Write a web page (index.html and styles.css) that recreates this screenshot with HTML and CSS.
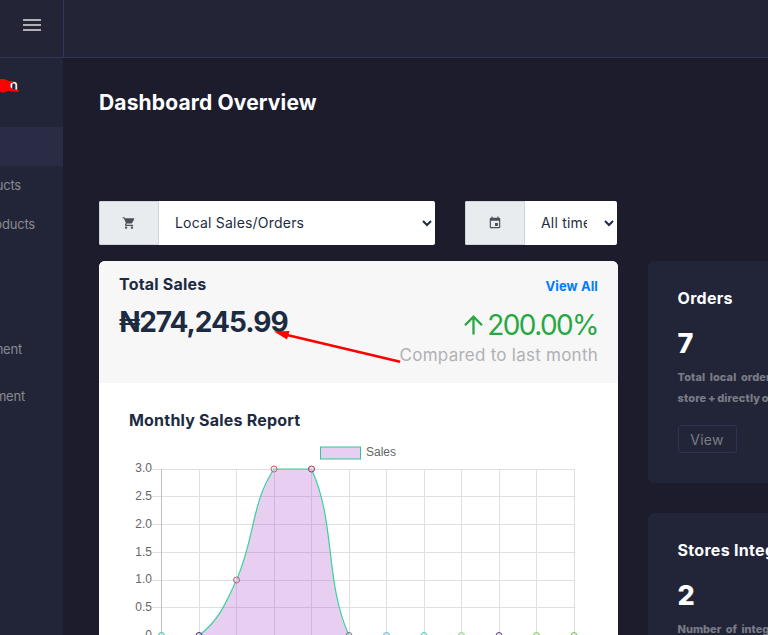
FILE: index.html
```html
<!DOCTYPE html>
<html lang="en">
<head>
    <meta charset="UTF-8">
    <meta name="viewport" content="width=device-width, initial-scale=1.0">
    <title>Dashboard Overview</title>
    <link rel="stylesheet" href="styles.css">
</head>
<body>
    <header class="topbar">
        <div class="topbar-brand">
            <svg class="menu-icon" width="18" height="12" viewBox="0 0 18 12"><path d="M0 0h18v2H0zM0 5h18v2H0zM0 10h18v2H0z" fill="#b1b1b5"/></svg>
        </div>
    </header>

    <div class="layout">
        <aside class="sidebar">
            <div class="user-name">n</div>
            <ul class="nav">
                <li class="nav-item active"></li>
                <li class="nav-item products">Products</li>
                <li class="nav-item more-products">Products</li>
                <li class="nav-item management">Management</li>
                <li class="nav-item management-last">Management</li>
            </ul>
        </aside>

        <main class="content">
            <h1>Dashboard Overview</h1>

            <div class="filters">
                <div class="input-group sales-filter">
                    <span class="input-icon">
                        <svg width="14" height="14" viewBox="0 0 24 24" fill="#495057"><path d="M7 18c-1.1 0-1.99.9-1.99 2S5.9 22 7 22s2-.9 2-2-.9-2-2-2zM1 2v2h2l3.6 7.59-1.35 2.45c-.16.28-.25.61-.25.96 0 1.1.9 2 2 2h12v-2H7.42c-.14 0-.25-.11-.25-.25l.03-.12.9-1.63h7.45c.75 0 1.41-.41 1.75-1.03l3.58-6.49A1 1 0 0 0 20.01 4H5.21l-.94-2H1zm16 16c-1.1 0-1.99.9-1.99 2s.89 2 1.99 2 2-.9 2-2-.9-2-2-2z"/></svg>
                    </span>
                    <select><option>Local Sales/Orders</option></select>
                </div>
                <div class="input-group time-filter">
                    <span class="input-icon">
                        <svg width="14" height="14" viewBox="0 0 24 24" fill="#495057"><path d="M17 12h-5v5h5v-5zM16 1v2H8V1H6v2H5c-1.11 0-1.99.9-1.99 2L3 19a2 2 0 0 0 2 2h14c1.1 0 2-.9 2-2V5c0-1.1-.9-2-2-2h-1V1h-2zm3 18H5V8h14v11z"/></svg>
                    </span>
                    <select><option>All time</option></select>
                </div>
            </div>

            <div class="cards">
                <section class="sales-card">
                    <div class="sales-header">
                        <div>
                            <h2 class="sales-title">Total Sales</h2>
                            <div class="sales-amount">₦274,245.99</div>
                        </div>
                        <div class="sales-compare">
                            <a class="view-all">View All</a>
                            <div class="percent">
                                <svg width="19" height="20" viewBox="0 0 19 20" fill="none" stroke="#28a745" stroke-width="2.3"><path d="M9.5 19.5V2M1 10.3l8.5-8.6 8.5 8.6"/></svg>
                                <span>200.00%</span>
                            </div>
                            <div class="compare-text">Compared to last month</div>
                        </div>
                    </div>
                    <div class="sales-body">
                        <h2 class="report-title">Monthly Sales Report</h2>
                        <svg class="chart" width="460" height="195" viewBox="129 440 460 195">
                            <!-- legend -->
                            <rect x="320.5" y="447" width="40" height="12" fill="#e7cff1" stroke="#35c492"/>
                            <text x="366" y="456">Sales</text>

                            <!-- grid -->
                            <path class="grid" d="M152 469.5H575M152 496.5H575M152 524.5H575M152 552.5H575M152 580.5H575M152 607.5H575"/>
                            <path class="grid" d="M199.5 469V635M236.5 469V635M274.5 469V635M311.5 469V635M349.5 469V635M386.5 469V635M424.5 469V635M461.5 469V635M499.5 469V635M536.5 469V635M574.5 469V635"/>
                            <path d="M161.5 469V635" stroke="#bfbfbf"/>

                            <!-- y axis -->
                            <g text-anchor="end">
                                <text x="152" y="472">3.0</text>
                                <text x="152" y="500">2.5</text>
                                <text x="152" y="528">2.0</text>
                                <text x="152" y="556">1.5</text>
                                <text x="152" y="583">1.0</text>
                                <text x="152" y="611">0.5</text>
                                <text x="152" y="639">0</text>
                            </g>

                            <!-- sales curve -->
                            <path d="M161.5 635.5C161.5 635.5 188.2 635.5 199 635.5C218.2 621 225.6 604.1 236.5 580C255.1 537.7 251.3 502.6 274 469C281.3 469 306.1 469 311.5 469C336.1 523.4 324.4 580.6 349 635.5H574" fill="#b361d4" fill-opacity=".3" stroke="#36d399" stroke-width="1.2"/>

                            <g class="points">
                                <circle cx="161.5" cy="635.5" r="3" stroke="#35d08e"/>
                                <circle cx="199" cy="635.5" r="3" stroke="#3b2a86"/>
                                <circle cx="236.5" cy="580" r="3" stroke="#b85e70"/>
                                <circle cx="274" cy="469" r="3" stroke="#dc5b5b"/>
                                <circle cx="311.5" cy="469" r="3" stroke="#a62d50"/>
                                <circle cx="349" cy="635.5" r="3" stroke="#777"/>
                                <circle cx="386.5" cy="635.5" r="3" stroke="#4bbcd8"/>
                                <circle cx="424" cy="635.5" r="3" stroke="#40dcae"/>
                                <circle cx="461.5" cy="635.5" r="3" stroke="#80e568"/>
                                <circle cx="499" cy="635.5" r="3" stroke="#584588"/>
                                <circle cx="536.5" cy="635.5" r="3" stroke="#68d93c"/>
                                <circle cx="574" cy="635.5" r="3" stroke="#72cf4f"/>
                            </g>
                        </svg>
                    </div>
                </section>

                <div class="stats">
                    <section class="stat-card">
                        <h2>Orders</h2>
                        <div class="stat-value">7</div>
                        <p><span class="line-one">Total local orders from</span><br><span class="line-two">store + directly on</span></p>
                        <button>View</button>
                    </section>
                    <section class="stat-card stores">
                        <h2>Stores Integrated</h2>
                        <div class="stat-value">2</div>
                        <p><span class="line-three">Number of integrated</span></p>
                    </section>
                </div>
            </div>
        </main>
    </div>

    <svg class="annotations" width="768" height="635" viewBox="0 0 768 635">
        <path d="M0 79L4 79 9 81 15 81 10 84 10 87 13 89 19 90 18 92 9 91 2 93 0 91z" fill="#f00"/>
        <path d="M399 361.500L285 334.500" stroke="#f00" stroke-width="2.8" stroke-linecap="round"/>
        <path d="M274 331.500L289.500 331L287 339.500z" fill="#f00"/>
    </svg>
</body>
</html>
```
FILE: styles.css
```css
* { box-sizing: border-box; }
body { margin: 0; height: 100vh; overflow: hidden; background: #1c1c2d; color: #1d2b42; font-family: Inter, "Open Sans", sans-serif; position: relative; }
h1, h2, p, ul { margin: 0; padding: 0; }

/* top bar */
.topbar { display: flex; height: 58px; background: #232537; border-bottom: 1px solid #33345a; }
.topbar-brand { width: 64px; padding: 19px 0 0 23px; border-right: 1px solid #33345a; }
.menu-icon { display: block; }

.layout { display: flex; height: 577px; overflow: hidden; }

/* sidebar */
.sidebar { flex: none; width: 63px; background: #222537; overflow: hidden; }
.user-name { height: 69px; width: 18px; padding-top: 17px; text-align: right; color: #fff; font-size: 14px; line-height: 20px; font-weight: 500; }
.nav { list-style: none; }
.nav-item { display: flex; justify-content: flex-end; align-items: center; height: 39px; padding-bottom: 2px; overflow: hidden; color: #888a92; font-size: 13px; letter-spacing: -0.2px; }
.nav-item.active { background: #2a2c46; }
.products { width: 21px; }
.more-products { width: 35px; }
.management { width: 22px; margin-top: 86px; }
.management-last { width: 25px; margin-top: 8px; }

/* content */
.content { flex: none; width: 705px; padding: 30px 0 0 36px; overflow: hidden; }
h1 { color: #fff; font-size: 21px; line-height: 30px; font-weight: 700; letter-spacing: 0.15px; white-space: nowrap; }
.filters { display: flex; gap: 30px; margin-top: 83px; }
.input-group { display: flex; height: 44px; border-radius: 2px; overflow: hidden; }
.sales-filter { width: 336px; }
.time-filter { width: 152px; }
.input-icon { flex: none; display: flex; align-items: center; justify-content: center; width: 60px; background: #e9ecef; border: 1px solid #ced4da; }
select { flex: 1; min-width: 0; height: 44px; padding: 0 0 2px 12px; background: #fff; color: #1d2b42; border: 0; font-family: inherit; font-size: 14px; letter-spacing: 0.2px; }
.time-filter select { padding-right: 14px; }

.cards { display: flex; gap: 30px; height: 374px; margin-top: 16px; overflow: hidden; }
.sales-card { flex: none; width: 519px; background: #fff; border-radius: 6px 6px 0 0; overflow: hidden; }
.sales-header { display: flex; justify-content: space-between; height: 122px; padding: 11px 20px; background: #f7f7f7; white-space: nowrap; }
.sales-title, .report-title { font-size: 16px; line-height: 24px; font-weight: 700; letter-spacing: 0.2px; }
.sales-amount { margin-top: 5px; font-size: 28px; line-height: 42px; font-weight: 700; letter-spacing: -1px; }
.sales-compare { text-align: right; }
.view-all { display: block; padding-top: 4px; color: #007bff; font-size: 13px; line-height: 20px; font-weight: 700; letter-spacing: 0.1px; }
.percent { display: flex; justify-content: flex-end; align-items: center; gap: 4px; height: 32px; margin-top: 13px; color: #28a745; font-size: 28px; line-height: 32px; letter-spacing: -1.6px; }
.compare-text { margin-top: 2px; color: #b1b1b5; font-size: 17px; line-height: 24px; letter-spacing: 0.25px; }
.sales-body { padding: 25px 0 0 30px; }
.chart { display: block; margin-top: 8px; font-family: "Liberation Sans", Arial, sans-serif; font-size: 12px; }
.chart text { fill: #666; }
.grid { stroke: #dfdfdf; }
.points { fill: #e7cff1; fill-opacity: .5; }

/* stat cards */
.stats { flex: none; width: 120px; display: flex; flex-direction: column; gap: 30px; color: #fff; overflow: hidden; }
.stat-card { flex: none; height: 222px; padding: 25px 0 0 29.5px; background: #222537; border-radius: 6px 0 0 6px; white-space: nowrap; overflow: hidden; }
.stat-card.stores { height: 122px; border-radius: 6px 0 0 0; }
.stat-card h2 { font-size: 16px; line-height: 24px; font-weight: 700; letter-spacing: 0.3px; }
.stat-value { margin-top: 13px; font-size: 27px; line-height: 42px; font-weight: 800; }
.stat-card p { margin-top: 2px; color: #797b86; font-size: 11px; line-height: 21px; font-weight: 800; }
.line-one { letter-spacing: 0.1px; word-spacing: 2px; }
.line-two { letter-spacing: 0.15px; word-spacing: -1px; }
.line-three { word-spacing: 2px; }
.stat-card button { display: block; width: 59px; height: 28px; margin-top: 16px; padding: 0; background: none; border: 1px solid #303154; border-radius: 3px; color: #797b86; font-family: inherit; font-size: 14px; letter-spacing: 0.3px; }

.annotations { position: absolute; top: 0; left: 0; pointer-events: none; }
```
